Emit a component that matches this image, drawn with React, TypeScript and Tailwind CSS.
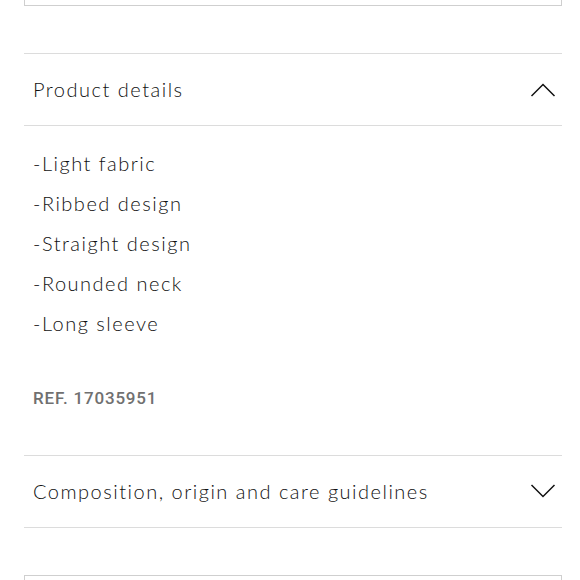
import { ReactNode } from 'react';

const details = ['-Light fabric', '-Ribbed design', '-Straight design', '-Rounded neck', '-Long sleeve'];

function Chevron({ up }: { up?: boolean }) {
  return (
    <svg width="26" height="15" viewBox="0 0 26 15" fill="none" className="shrink-0">
      <path
        d={up ? 'M1.5 14 L13 2.5 L24.5 14' : 'M1.5 1 L13 12.5 L24.5 1'}
        stroke="#111"
        strokeWidth="1.5"
      />
    </svg>
  );
}

function SectionHeader({ title, open }: { title: string; open?: boolean }) {
  return (
    <button className="flex h-[71px] w-full items-center justify-between pl-[9px] pr-[6px] text-left">
      <span className="-mt-[1px] text-[20px] font-light tracking-[1.5px] text-[#111]">{title}</span>
      <Chevron up={open} />
    </button>
  );
}

function Section({ title, open, children }: { title: string; open?: boolean; children?: ReactNode }) {
  return (
    <div className="border-t border-[#dcdcdc]">
      <SectionHeader title={title} open={open} />
      {open && <div className="border-t border-[#dcdcdc]">{children}</div>}
    </div>
  );
}

export default function App() {
  return (
    <div className="h-[580px] w-[580px] overflow-hidden bg-white font-['Lato',sans-serif]">
      <div className="mx-[24px] w-[538px]">
        <div className="h-[6px] border-x border-b border-[#cfcfcf]" />
        <div className="mt-[47px]">
          <Section title="Product details" open>
            <ul className="pl-[9px] pt-[17px]">
              {details.map((d) => (
                <li key={d} className="text-[20px] font-light leading-[40px] tracking-[1.5px] text-[#111]">
                  {d}
                </li>
              ))}
            </ul>
            <p className="mt-[43px] pb-[45px] pl-[9px] font-['Roboto',sans-serif] text-[17px] font-medium leading-[24px] tracking-[0.8px] text-[#707070]">
              REF. 17035951
            </p>
          </Section>
          <div className="border-b border-[#dcdcdc]">
            <Section title="Composition, origin and care guidelines" />
          </div>
        </div>
        <div className="mt-[47px] h-[20px] border-x border-t border-[#cfcfcf]" />
      </div>
    </div>
  );
}
